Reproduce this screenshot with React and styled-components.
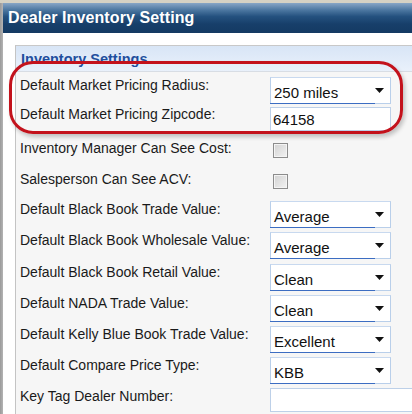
import React from 'react'
import styled, { createGlobalStyle } from 'styled-components'

const GlobalStyle = createGlobalStyle`
  html, body { margin: 0; padding: 0; background: #fff; }
  body { font-family: "Liberation Sans", Arial, sans-serif; }
`

const Page = styled.div`
  width: 412px;
  height: 414px;
  overflow: hidden;
  border-top: 3px solid #d5d2c4;
  box-sizing: border-box;
  display: flex;
`

const Frame = styled.div`
  width: 3px;
  flex: none;
  background: linear-gradient(to right, #9a9a9a, #b4b4b4);
`

const Main = styled.div`
  flex: 1;
  display: flex;
  flex-direction: column;
  min-width: 0;
`

const Header = styled.div`
  height: 31px;
  padding-left: 5px;
  display: flex;
  align-items: center;
  background: linear-gradient(#87a6c6 0%, #4f7aa3 22%, #24517f 45%, #173f6a 70%, #143a63 100%);
  color: #fff;
  font-weight: bold;
  font-size: 16px;
  letter-spacing: 0.1px;
`

const Body = styled.div`
  padding: 12px 0 0 12px;
`

const Panel = styled.div`
  position: relative;
  width: 420px;
  border-left: 1px solid #c4c4c4;
  border-top: 1px solid #c8c8c8;
  background: #f6f6f6;
`

const SectionTitle = styled.div`
  height: 25px;
  padding-left: 5px;
  display: flex;
  align-items: center;
  background: linear-gradient(#d8e5f6, #e9f1fb);
  border-bottom: 1px solid #d8dde4;
  margin-bottom: 1px;
  color: #1f4f9d;
  font-weight: bold;
  font-size: 14.5px;
`

const Rows = styled.div`
  display: flex;
  flex-direction: column;
  padding-left: 4px;
`

const Row = styled.div`
  height: ${p => p.$h}px;
  display: grid;
  grid-template-columns: 250px 1fr;
  align-items: start;
`

const Label = styled.div`
  margin-top: ${p => p.$top}px;
  font-size: 14px;
  line-height: 16px;
  color: #1a1a1a;
`

const SelectBox = styled.div`
  margin-top: 4px;
  position: relative;
  width: 121px;
  height: 25px;
  background: #fff;
  border: 1px solid #b9cfea;
  border-top-color: #c8d9ef;
  font-size: 15px;
  color: #111;
  padding: 6px 0 0 3px;
  box-sizing: border-box;
  height: 27px;

  &::after {
    content: '';
    position: absolute;
    left: -1px;
    bottom: -1px;
    width: 105px;
    height: 1px;
    background: #3c6dc2;
  }

  svg {
    position: absolute;
    right: 6px;
    top: 10px;
  }
`

const TextInput = styled.div`
  margin-top: 4px;
  width: ${p => p.$w}px;
  height: 24px;
  background: #fff;
  border: 1px solid #bdd0e8;
  box-sizing: border-box;
  font-size: 15px;
  color: #111;
  padding: 3px 0 0 2px;
`

const CheckBox = styled.div`
  margin: 4px 0 0 3px;
  width: 15px;
  height: 15px;
  box-sizing: border-box;
  border: 1px solid #8c8c8c;
  background: linear-gradient(135deg, #d2d2d2, #f2f2f2);
  box-shadow: inset 0 0 0 1px #f4f4f4;
`

const Highlight = styled.div`
  position: absolute;
  left: -7px;
  top: 15px;
  width: 394px;
  height: 73px;
  box-sizing: border-box;
  border: 3px solid #c3121c;
  border-radius: 24px;
  box-shadow: 2px 3px 4px rgba(0, 0, 0, 0.22);
  pointer-events: none;
`

const Arrow = () => (
  <svg width="9" height="5" viewBox="0 0 9 5">
    <path d="M0 0 H9 L4.5 5 Z" fill="#111" />
  </svg>
)

const Select = ({ value }) => (
  <SelectBox>
    {value}
    <Arrow />
  </SelectBox>
)

const rows = [
  { label: 'Default Market Pricing Radius:', h: 30, top: 4, select: '250 miles' },
  { label: 'Default Market Pricing Zipcode:', h: 36, top: 3, input: '64158', w: 121 },
  { label: 'Inventory Manager Can See Cost:', h: 31, top: 1, check: true },
  { label: 'Salesperson Can See ACV:', h: 27, top: 1, check: true },
  { label: 'Default Black Book Trade Value:', h: 31, top: 4, select: 'Average' },
  { label: 'Default Black Book Wholesale Value:', h: 32, top: 4, select: 'Average' },
  { label: 'Default Black Book Retail Value:', h: 31, top: 4, select: 'Clean' },
  { label: 'Default NADA Trade Value:', h: 31, top: 4, select: 'Clean' },
  { label: 'Default Kelly Blue Book Trade Value:', h: 31, top: 4, select: 'Excellent' },
  { label: 'Default Compare Price Type:', h: 31, top: 4, select: 'KBB' },
  { label: 'Key Tag Dealer Number:', h: 30, top: 4, input: '', w: 160 },
]

const App = () => {
  return (
    <>
      <GlobalStyle />
      <Page>
        <Frame />
        <Main>
          <Header>Dealer Inventory Setting</Header>
          <Body>
            <Panel>
              <SectionTitle>Inventory Settings</SectionTitle>
              <Rows>
                {rows.map((r) => (
                  <Row key={r.label} $h={r.h}>
                    <Label $top={r.top}>{r.label}</Label>
                    {r.select && <Select value={r.select} />}
                    {r.input !== undefined && <TextInput $w={r.w}>{r.input}</TextInput>}
                    {r.check && <CheckBox />}
                  </Row>
                ))}
              </Rows>
              <Highlight />
            </Panel>
          </Body>
        </Main>
      </Page>
    </>
  )
}

export default App
